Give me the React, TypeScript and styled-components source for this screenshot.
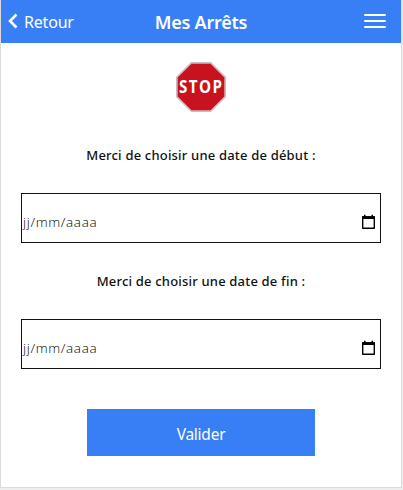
import React from "react";
import styled, { createGlobalStyle } from "styled-components";

const GlobalStyle = createGlobalStyle`
  * { box-sizing: border-box; }
  body { margin: 0; background: #eeeeee; font-family: "Open Sans", "Noto Sans", sans-serif; overflow: hidden; }
`;

const Screen = styled.div`
  width: 402px;
  height: 488px;
  background: #fff;
  border: solid #dcdcdc;
  border-width: 0 1px 1px;
`;

const Header = styled.header`
  height: 43px;
  background: #387ef5;
  color: #fff;
  display: grid;
  grid-template-columns: 100px 1fr 100px;
  align-items: center;
`;

const BackButton = styled.button`
  display: flex;
  align-items: center;
  gap: 6px;
  height: 43px;
  padding: 0 0 1px 7px;
  border: 0;
  background: none;
  color: inherit;
  font: 400 16px/22px "Noto Sans", sans-serif;
  letter-spacing: -0.2px;
`;

const BackLabel = styled.span`
  padding-top: 1px;
`;

const Title = styled.h1`
  margin: 0;
  text-align: center;
  font: 600 18px/24px "Noto Sans", sans-serif;
  letter-spacing: -0.25px;
`;

const MenuButton = styled.button`
  justify-self: end;
  display: flex;
  flex-direction: column;
  gap: 4px;
  width: 22px;
  margin: 0 15px 1px 0;
  padding: 0;
  border: 0;
  background: none;
`;

const MenuLine = styled.span`
  height: 2px;
  border-radius: 1px;
  background: #fff;
`;

const Form = styled.form`
  display: flex;
  flex-direction: column;
  align-items: center;
  padding: 19px 20px 0;
`;

const SignIcon = styled.svg`
  display: block;
  width: 50px;
  height: 50px;
  margin-bottom: 33px;
  overflow: visible;
`;

const Label = styled.label`
  height: 20px;
  color: #111;
  font: 500 13px/20px "Noto Sans", sans-serif;
  letter-spacing: 0.19px;
  white-space: nowrap;
`;

const DateField = styled.div`
  display: flex;
  align-items: center;
  justify-content: space-between;
  width: 360px;
  height: 50px;
  margin: 28px 0;
  padding: 8px 4px 0 1px;
  border: 1px solid #111;
`;

const DateHint = styled.span`
  color: #000;
  font: 300 13.5px/20px "Open Sans", sans-serif;
  letter-spacing: 0.65px;
`;

const Submit = styled.button`
  width: 228px;
  height: 47px;
  margin-top: 12px;
  padding: 2px 0 0;
  border: 0;
  background: #387ef5;
  color: #fff;
  font: 400 15.5px/22px "Noto Sans", sans-serif;
  letter-spacing: -0.25px;
`;

function StopSign() {
  return (
    <SignIcon viewBox="0 0 50 50" aria-label="Stop">
      <path d="M15 .5h20L49.5 15v20L35 49.5H15L.5 35V15z" fill="#d9b4b6" stroke="#c4bebe" />
      <path d="M15.5 1.7h19L48.3 15.5v19L34.5 48.3h-19L1.7 34.5v-19z" fill="#c8121f" />
      <text
        transform="scale(0.82 1)"
        x="30.8"
        y="31.5"
        textAnchor="middle"
        letterSpacing="1.8"
        fill="#fff"
        fontFamily="Open Sans"
        fontWeight="700"
        fontSize="18.5"
      >
        STOP
      </text>
    </SignIcon>
  );
}

function CalendarIcon() {
  return (
    <svg width="15" height="16" viewBox="0 0 15 16">
      <path d="M1.7 3h11.6v11.3H1.7z" fill="none" stroke="#000" strokeWidth="1.4" strokeLinejoin="round" />
      <path d="M1 2.3h13v2.8H1zM3 .8h1.5v2H3zM10.5.8H12v2h-1.5z" fill="#000" />
    </svg>
  );
}

function DateInput() {
  return (
    <DateField>
      <DateHint>jj/mm/aaaa</DateHint>
      <CalendarIcon />
    </DateField>
  );
}

export default function App() {
  return (
    <>
      <GlobalStyle />
      <Screen>
        <Header>
          <BackButton>
            <svg width="10" height="16" viewBox="0 0 10 16">
              <path d="M8.5 1.5L2 8l6.5 6.5" fill="none" stroke="#fff" strokeWidth="2.6" />
            </svg>
            <BackLabel>Retour</BackLabel>
          </BackButton>
          <Title>Mes Arrêts</Title>
          <MenuButton aria-label="Menu">
            <MenuLine />
            <MenuLine />
            <MenuLine />
          </MenuButton>
        </Header>
        <Form>
          <StopSign />
          <Label>Merci de choisir une date de début :</Label>
          <DateInput />
          <Label>Merci de choisir une date de fin :</Label>
          <DateInput />
          <Submit type="button">Valider</Submit>
        </Form>
      </Screen>
    </>
  );
}
